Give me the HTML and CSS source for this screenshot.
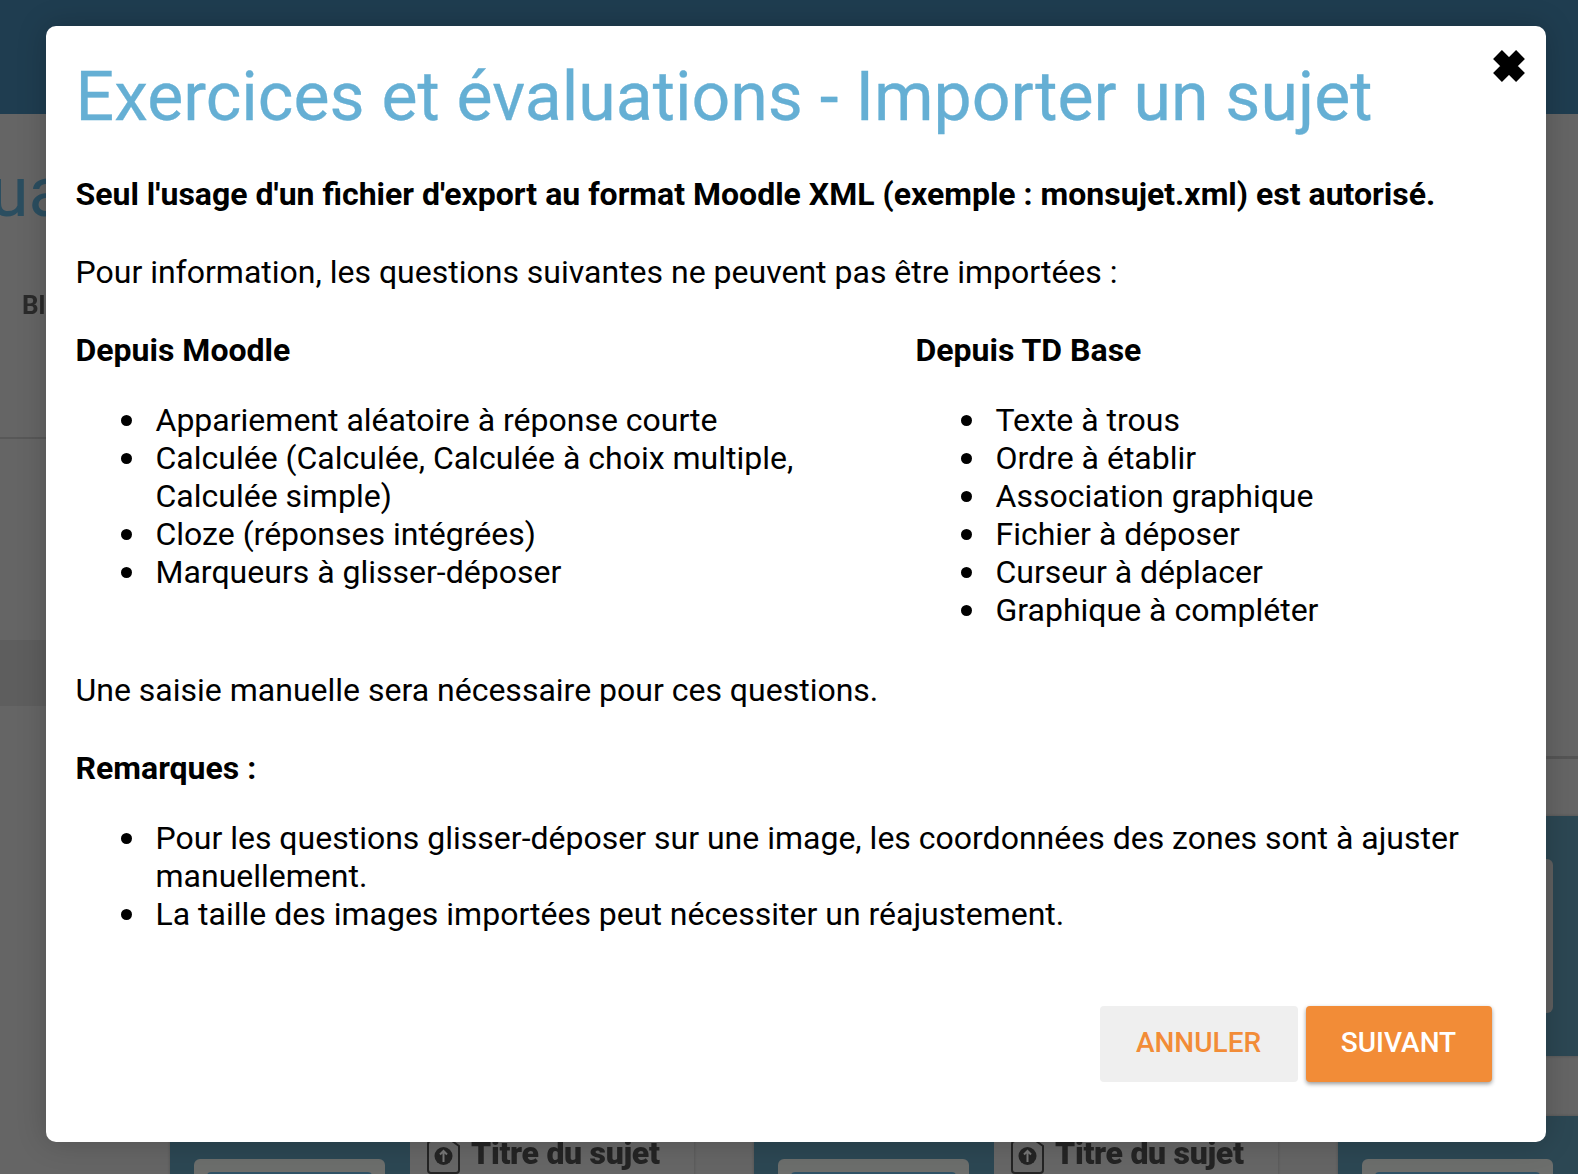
FILE: index.html
```html
<!DOCTYPE html>
<html lang="fr">
<head>
  <meta charset="UTF-8">
  <meta name="viewport" content="width=device-width, initial-scale=1.0">
  <title>Importer un sujet</title>
  <link rel="stylesheet" href="styles.css">
</head>
<body>
  <div class="page">
    <div class="topbar"></div>
    <div class="intro">
      <div class="page-title">ua</div>
      <div class="page-label">Bl</div>
    </div>
    <div class="band"></div>
    <div class="rule"></div>
    <div class="grid">
      <div class="subject"><div class="thumb"><div class="thumb-top"><div class="thumb-img"></div></div></div><div class="info"></div></div>
      <div class="subject"><div class="thumb"><div class="thumb-top"><div class="thumb-img"></div></div></div><div class="info"></div></div>
      <div class="subject"><div class="thumb"><div class="thumb-top"><div class="thumb-img"></div></div></div><div class="info"></div></div>
      <div class="subject"><div class="thumb"><div class="thumb-top"><div class="thumb-img"></div></div></div><div class="info"><svg class="file-icon" viewBox="0 0 33 34"><path d="M8 1H25L32 6V30a3 3 0 0 1-3 3H4a3 3 0 0 1-3-3V4a3 3 0 0 1 3-3Z" fill="none" stroke="currentColor" stroke-width="2"/><circle cx="16.500" cy="16" r="9" fill="currentColor"/><path d="M16.500 22V11M13 14.500l3.500-3.500L20 14.500" fill="none" stroke="#777" stroke-width="2"/></svg><span>Titre du sujet</span></div></div>
      <div class="subject"><div class="thumb"><div class="thumb-top"><div class="thumb-img"></div></div></div><div class="info"><svg class="file-icon" viewBox="0 0 33 34"><path d="M8 1H25L32 6V30a3 3 0 0 1-3 3H4a3 3 0 0 1-3-3V4a3 3 0 0 1 3-3Z" fill="none" stroke="currentColor" stroke-width="2"/><circle cx="16.500" cy="16" r="9" fill="currentColor"/><path d="M16.500 22V11M13 14.500l3.500-3.500L20 14.500" fill="none" stroke="#777" stroke-width="2"/></svg><span>Titre du sujet</span></div></div>
      <div class="subject"><div class="thumb"><div class="thumb-top"><div class="thumb-img"></div></div></div><div class="info"></div></div>
    </div>
  </div>

  <div class="modal">
    <button class="close" aria-label="Fermer">
      <svg viewBox="0 0 32 32" width="32" height="32"><path d="M4.500 4.500L27.500 27.500M27.500 4.500L4.500 27.500" stroke="#000" stroke-width="12.500"/></svg>
    </button>
    <h1>Exercices et évaluations - Importer un sujet</h1>
    <p><strong>Seul l'usage d'un fichier d'export au format Moodle XML (exemple : monsujet.xml) est autorisé.</strong></p>
    <p>Pour information, les questions suivantes ne peuvent pas être importées :</p>
    <div class="columns">
      <div>
        <h2>Depuis Moodle</h2>
        <ul>
          <li>Appariement aléatoire à réponse courte</li>
          <li>Calculée (Calculée, Calculée à choix multiple, Calculée simple)</li>
          <li>Cloze (réponses intégrées)</li>
          <li>Marqueurs à glisser-déposer</li>
        </ul>
      </div>
      <div>
        <h2>Depuis TD Base</h2>
        <ul>
          <li>Texte à trous</li>
          <li>Ordre à établir</li>
          <li>Association graphique</li>
          <li>Fichier à déposer</li>
          <li>Curseur à déplacer</li>
          <li>Graphique à compléter</li>
        </ul>
      </div>
    </div>
    <p>Une saisie manuelle sera nécessaire pour ces questions.</p>
    <h2>Remarques :</h2>
    <ul>
      <li>Pour les questions glisser-déposer sur une image, les coordonnées des zones sont à ajuster manuellement.</li>
      <li>La taille des images importées peut nécessiter un réajustement.</li>
    </ul>
    <div class="actions">
      <button class="btn btn-cancel">ANNULER</button>
      <button class="btn btn-next">SUIVANT</button>
    </div>
  </div>
</body>
</html>
```

FILE: styles.css
```css
html, body {
  margin: 0;
  height: 1174px;
  overflow: hidden;
}
body {
  position: relative;
  font-family: Roboto, "Liberation Sans", sans-serif;
  background-color: #656565;
  color: #000;
}

/* page behind the dialog, dimmed */
.page {
  height: 1174px;
  overflow: hidden;
}
.topbar {
  height: 114px;
  background-color: #1f3d50;
}
.intro {
  width: 600px;
  height: 325px;
  box-sizing: border-box;
  padding-top: 38px;
  border-bottom: 2px solid #585858;
}
.page-title {
  font-size: 70px;
  line-height: 80px;
  margin-left: -10px;
  color: #2b4e60;
  filter: blur(0.6px);
}
.page-label {
  font-size: 26px;
  line-height: 30px;
  font-weight: 700;
  margin: 58px 0 0 22px;
  color: #2a2a2a;
  filter: blur(0.6px);
}
.band {
  width: 600px;
  height: 66px;
  margin-top: 201px;
  background-color: #5e5e5e;
}
.rule {
  height: 3px;
  margin: 50px 0 0 1000px;
  background-color: #555;
}
.grid {
  display: grid;
  grid-template-columns: repeat(3, 524px);
  grid-auto-rows: 240px;
  gap: 60px;
  margin-top: 57px;
  padding-left: 170px;
}
.subject {
  display: flex;
  box-shadow: 0 0 3px rgba(0, 0, 0, 0.2);
}
.subject:nth-child(3) .thumb-top {
  background-color: #606060;
}
.thumb {
  width: 240px;
  flex: none;
  box-sizing: border-box;
  padding: 43px 25px 43px 24px;
  background-color: #2c4753;
}
.thumb-top {
  height: 100%;
  box-sizing: border-box;
  padding: 13px 13px 0;
  border-radius: 6px;
  background-color: #6c6e6c;
}
.thumb-img {
  height: 100%;
  border-radius: 4px 4px 0 0;
  background-color: #2f5266;
}
.info {
  display: flex;
  align-items: flex-start;
  gap: 11px;
  flex: 1;
  padding: 24px 0 0 17px;
  background-color: #666;
  font-size: 32px;
  line-height: 26px;
  font-weight: 900;
  color: #242424;
}
.info span {
  letter-spacing: -0.3px;
  filter: blur(0.4px);
}
.file-icon {
  width: 33px;
  height: 34px;
  flex: none;
  filter: blur(0.4px);
}

/* dialog */
.modal {
  position: absolute;
  left: 46px;
  top: 26px;
  width: 1500px;
  height: 1116px;
  box-sizing: border-box;
  padding: 31px 30px 0 29.500px;
  background-color: #fff;
  border-radius: 10px;
  box-shadow: 0 0 30px rgba(0, 0, 0, 0.2);
  font-size: 32px;
  line-height: 38px;
}
.close {
  position: absolute;
  top: 24px;
  right: 21px;
  padding: 0;
  border: 0;
  background: none;
  line-height: 0;
}
h1 {
  margin: 0 0 38px;
  font-size: 68px;
  line-height: 80px;
  font-weight: 400;
  color: #65afd4;
  -webkit-text-stroke: 0.3px #65afd4;
}
p {
  margin: 0 0 40px;
}
h2 {
  margin: 0 0 32px;
  font-size: 32px;
  line-height: 38px;
  font-weight: 700;
}
ul {
  margin: 0;
  padding-left: 80px;
  list-style: none;
}
li {
  position: relative;
}
li::before {
  content: "";
  position: absolute;
  left: -35px;
  top: 14px;
  width: 11px;
  height: 11px;
  border-radius: 50%;
  background-color: #000;
}
.columns {
  display: grid;
  grid-template-columns: 840px 1fr;
  margin-bottom: 42px;
}
.actions {
  display: flex;
  justify-content: flex-end;
  gap: 8px;
  margin: 73px 24.500px 0 0;
}
.btn {
  height: 76px;
  padding: 0 0 4px;
  border: 0;
  border-radius: 4px;
  font-family: inherit;
  font-size: 28px;
  font-weight: 500;
}
.btn-cancel {
  width: 198px;
  background-color: #efefef;
  color: #f28c37;
}
.btn-next {
  width: 186px;
  background-color: #f28c37;
  color: #fff;
  box-shadow: 0 2px 4px rgba(0, 0, 0, 0.4);
}
```
